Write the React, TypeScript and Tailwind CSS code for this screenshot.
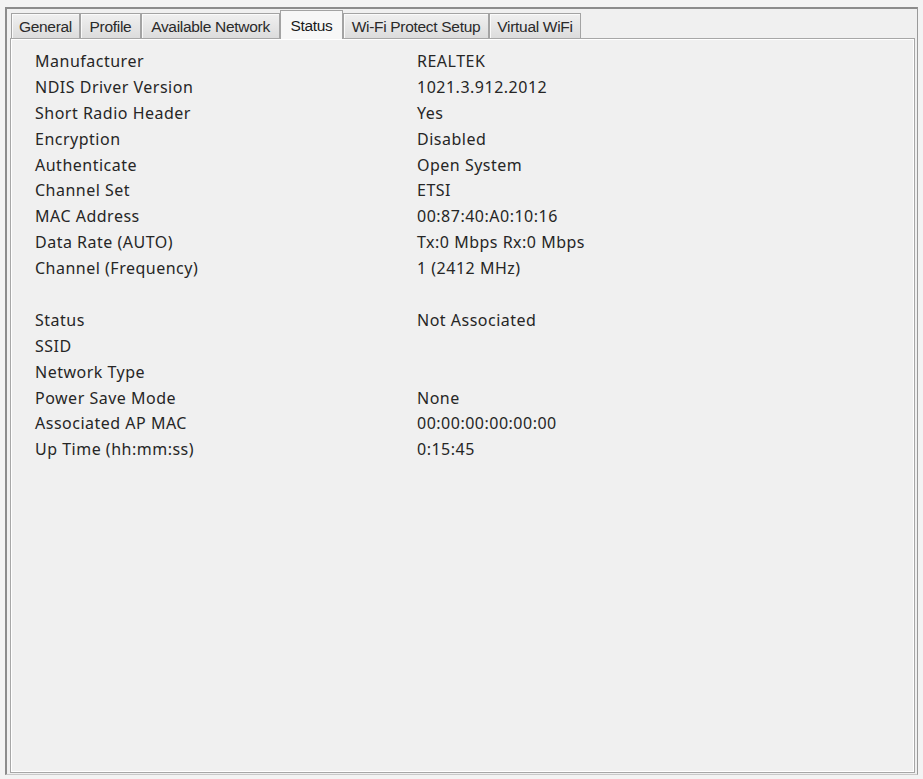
import React from "react";

const rows: [string, string][] = [
  ["Manufacturer", "REALTEK"],
  ["NDIS Driver Version", "1021.3.912.2012"],
  ["Short Radio Header", "Yes"],
  ["Encryption", "Disabled"],
  ["Authenticate", "Open System"],
  ["Channel Set", "ETSI"],
  ["MAC Address", "00:87:40:A0:10:16"],
  ["Data Rate (AUTO)", "Tx:0 Mbps Rx:0 Mbps"],
  ["Channel (Frequency)", "1 (2412 MHz)"],
  ["", ""],
  ["Status", "Not Associated"],
  ["SSID", ""],
  ["Network Type", ""],
  ["Power Save Mode", "None"],
  ["Associated AP MAC", "00:00:00:00:00:00"],
  ["Up Time (hh:mm:ss)", "0:15:45"],
];

const tabs = [
  { label: "General", w: "w-[69px]" },
  { label: "Profile", w: "w-[61px]" },
  { label: "Available Network", w: "w-[139px]" },
  { label: "Status", w: "w-[63px]", active: true },
  { label: "Wi-Fi Protect Setup", w: "w-[146px]" },
  { label: "Virtual WiFi", w: "w-[92px]" },
];

export default function App() {
  return (
    <div className="w-[923px] h-[779px] bg-[#f3f3f3] pt-[7px] pl-[5px] overflow-hidden">
      <div
        className="w-[913px] h-[768px] border-t-2 border-l-2 border-r border-b border-t-[#8c8c8c] border-l-[#8c8c8c] border-r-[#9a9a9a] border-b-[#c8c8c8] bg-[#f0f0f0] flex flex-col pl-[3px] pt-[1px]"
        style={{ fontFamily: '"Liberation Sans", Arial, sans-serif' }}
      >
        <div className="flex items-end h-[28px] pl-[1px] relative z-10">
          {tabs.map((t) =>
            t.active ? (
              <div
                key={t.label}
                className={`${t.w} h-[29px] -mb-[1px] bg-[#f7f7f7] border border-b-0 border-[#a3a3a3] flex items-start justify-center pt-[3px] text-[15.5px] text-[#1a1a1a] tracking-[-0.3px]`}
              >
                {t.label}
              </div>
            ) : (
              <div
                key={t.label}
                className={`${t.w} h-[25px] bg-gradient-to-b from-[#f0f0f0] to-[#dcdcdc] border border-[#a3a3a3] border-b-0 flex items-center justify-center pt-[1px] text-[15.5px] text-[#2a2a2a] tracking-[-0.3px] shadow-[inset_1px_1px_0_#fafafa]`}
              >
                {t.label}
              </div>
            )
          )}
        </div>
        <div className="w-[905px] flex-1 mb-[1px] border border-[#a7a7a7] shadow-[inset_1px_1px_0_#ffffff,inset_-1px_-1px_0_#ffffff] bg-[#f0f0f0] pt-[10px] pl-[24px]">
          <div
            className="flex flex-col text-[16px] tracking-[0.5px] text-[#262626]"
            style={{ fontFamily: '"Noto Sans", "Open Sans", sans-serif' }}
          >
            {rows.map(([k, v], i) => (
              <div key={i} className="flex h-[25.9px] leading-[25.9px]">
                <div className="w-[382px]">{k}</div>
                <div>{v}</div>
              </div>
            ))}
          </div>
        </div>
      </div>
    </div>
  );
}
